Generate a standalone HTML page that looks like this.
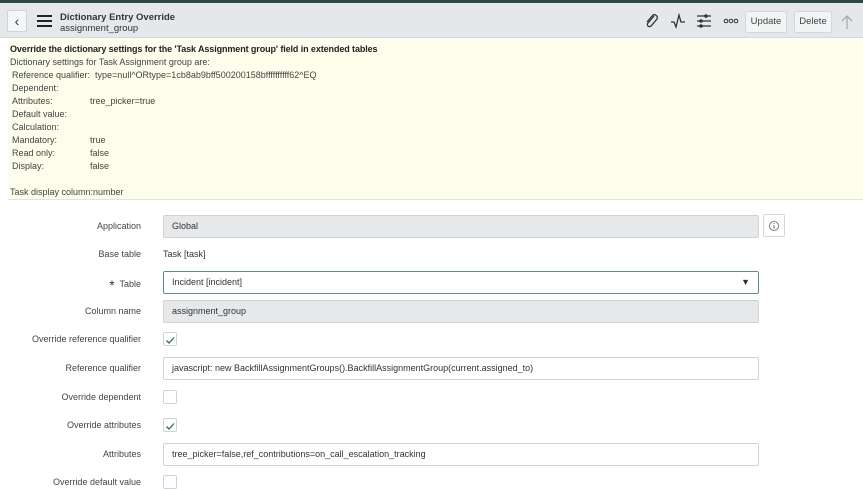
<!DOCTYPE html>
<html><head><meta charset="utf-8"><style>
*{box-sizing:border-box;margin:0;padding:0}
body{width:863px;height:479px;overflow:hidden;background:#fff;font-family:"Liberation Sans",sans-serif;color:#333;position:relative}
.top{position:absolute;left:0;top:0;width:863px;height:3px;background:#2f4a45}
.hdr{position:absolute;left:0;top:3px;width:863px;height:35px;background:#e5e8eb;border-bottom:1px solid #d5d8db}
.back{position:absolute;left:7px;top:7px;width:20px;height:22px;background:#f5f6f7;border:1px solid #d0d3d6;border-radius:2px;font-size:14px;text-align:center;line-height:20px;color:#333}
.t1{position:absolute;left:60px;top:9px;font-size:9.5px;font-weight:bold;color:#333}
.t2{position:absolute;left:60px;top:20px;font-size:9.5px;color:#333}
.btn{position:absolute;top:8px;height:22px;background:#f3f4f5;border:1px solid #d5d8db;border-radius:2px;font-size:9.5px;line-height:20px;text-align:center;color:#444}
.info{position:absolute;left:8px;top:39px;width:855px;height:161px;background:#fdfdeb;border-bottom:1px solid #e4e4d0;font-size:9px;line-height:13px;padding:4px 0 0 2px;color:#444}
.info b{color:#222;font-weight:bold;font-size:9px;letter-spacing:-0.1px}
.info .r{position:relative;height:13px;padding-left:2px}
.info .r span{position:absolute;left:80px}
.lbl{position:absolute;right:722px;font-size:9px;color:#444;text-align:right;white-space:nowrap}
.inp{position:absolute;left:163px;width:596px;height:23px;border:1px solid #cfd3d6;border-radius:2px;font-size:9px;line-height:21px;padding-left:8px;color:#333;background:#fff}
.ro{background:#e6e8ea}
.cb{position:absolute;left:163px;width:14px;height:14px;border:1px solid #cfd3d6;border-radius:2px;background:#fff}
</style></head><body>
<div class="top"></div>
<div class="hdr">
<div class="back">&#8249;</div>
<svg style="position:absolute;left:37px;top:12px" width="16" height="12"><rect x="0" y="0" width="15" height="2" fill="#222"/><rect x="0" y="5" width="15" height="2" fill="#222"/><rect x="0" y="10" width="15" height="2" fill="#222"/></svg>
<div class="t1">Dictionary Entry Override</div>
<div class="t2">assignment_group</div>
<svg style="position:absolute;left:644px;top:10px" width="16" height="16" viewBox="0 0 16 16"><path d="M10 3 L4 10 a2 2 0 0 0 3 3 L13 6 a3 3 0 0 0 -4 -4 L3 9" fill="none" stroke="#333" stroke-width="1.3"/></svg>
<svg style="position:absolute;left:670px;top:10px" width="16" height="16" viewBox="0 0 16 16"><path d="M1 9 L4 9 L6 14 L9 2 L11 9 L15 9" fill="none" stroke="#333" stroke-width="1.3"/></svg>
<svg style="position:absolute;left:697px;top:10px" width="14" height="16" viewBox="0 0 14 16"><path d="M0 3H14M0 8H14M0 13H14" stroke="#333" stroke-width="1.3"/><circle cx="9" cy="3" r="1.8" fill="#333"/><circle cx="4" cy="8" r="1.8" fill="#333"/><circle cx="4" cy="13" r="1.8" fill="#333"/></svg>
<svg style="position:absolute;left:723px;top:15px" width="16" height="6"><circle cx="3" cy="3" r="1.8" fill="none" stroke="#333"/><circle cx="8" cy="3" r="1.8" fill="none" stroke="#333"/><circle cx="13" cy="3" r="1.8" fill="none" stroke="#333"/></svg>
<div class="btn" style="left:745px;width:42px">Update</div>
<div class="btn" style="left:794px;width:38px">Delete</div>
<svg style="position:absolute;left:841px;top:11px" width="12" height="16"><path d="M6 15V2M1 7L6 2L11 7" fill="none" stroke="#aaa" stroke-width="1.3"/></svg>
</div>
<div class="info">
<b>Override the dictionary settings for the 'Task Assignment group' field in extended tables</b><br>
Dictionary settings for Task Assignment group are:
<div class="r">Reference qualifier: &nbsp;type=null^ORtype=1cb8ab9bff500200158bffffffffff62^EQ</div>
<div class="r">Dependent:</div>
<div class="r">Attributes:<span>tree_picker=true</span></div>
<div class="r">Default value:</div>
<div class="r">Calculation:</div>
<div class="r">Mandatory:<span>true</span></div>
<div class="r">Read only:<span>false</span></div>
<div class="r">Display:<span>false</span></div>
<div class="r"></div>
Task display column:number
</div>

<div class="lbl" style="top:221px">Application</div>
<div class="inp ro" style="top:215px">Global</div>
<div style="position:absolute;left:763px;top:214px;width:22px;height:23px;border:1px solid #d5d8db;border-radius:2px;background:#fff"><svg width="20" height="21"><circle cx="10" cy="11" r="4.5" fill="none" stroke="#666" stroke-width="0.8"/><path d="M10 10V14M10 8V9" stroke="#666" stroke-width="0.9"/></svg></div>

<div class="lbl" style="top:249px">Base table</div>
<div style="position:absolute;left:163px;top:249px;font-size:9px;color:#333">Task [task]</div>

<div class="lbl" style="top:277px"><span style="font-size:14px;color:#333;vertical-align:-3px">&#42;</span>&nbsp; Table</div>
<div class="inp" style="top:271px;border-color:#5e8f80">Incident [incident]<span style="position:absolute;right:8px;top:0;font-size:9px">&#9660;</span></div>

<div class="lbl" style="top:306px">Column name</div>
<div class="inp ro" style="top:300px">assignment_group</div>

<div class="lbl" style="top:334px">Override reference qualifier</div>
<div class="cb" style="top:332px"><svg width="12" height="12"><path d="M2.5 6.5L5 9L10 3.5" fill="none" stroke="#2e6f61" stroke-width="1.3"/></svg></div>

<div class="lbl" style="top:363px">Reference qualifier</div>
<div class="inp" style="top:357px">javascript: new BackfillAssignmentGroups().BackfillAssignmentGroup(current.assigned_to)</div>

<div class="lbl" style="top:392px">Override dependent</div>
<div class="cb" style="top:390px"></div>

<div class="lbl" style="top:420px">Override attributes</div>
<div class="cb" style="top:418px"><svg width="12" height="12"><path d="M2.5 6.5L5 9L10 3.5" fill="none" stroke="#2e6f61" stroke-width="1.3"/></svg></div>

<div class="lbl" style="top:449px">Attributes</div>
<div class="inp" style="top:443px">tree_picker=false,ref_contributions=on_call_escalation_tracking</div>

<div class="lbl" style="top:477px">Override default value</div>
<div class="cb" style="top:475px"></div>
</body></html>
